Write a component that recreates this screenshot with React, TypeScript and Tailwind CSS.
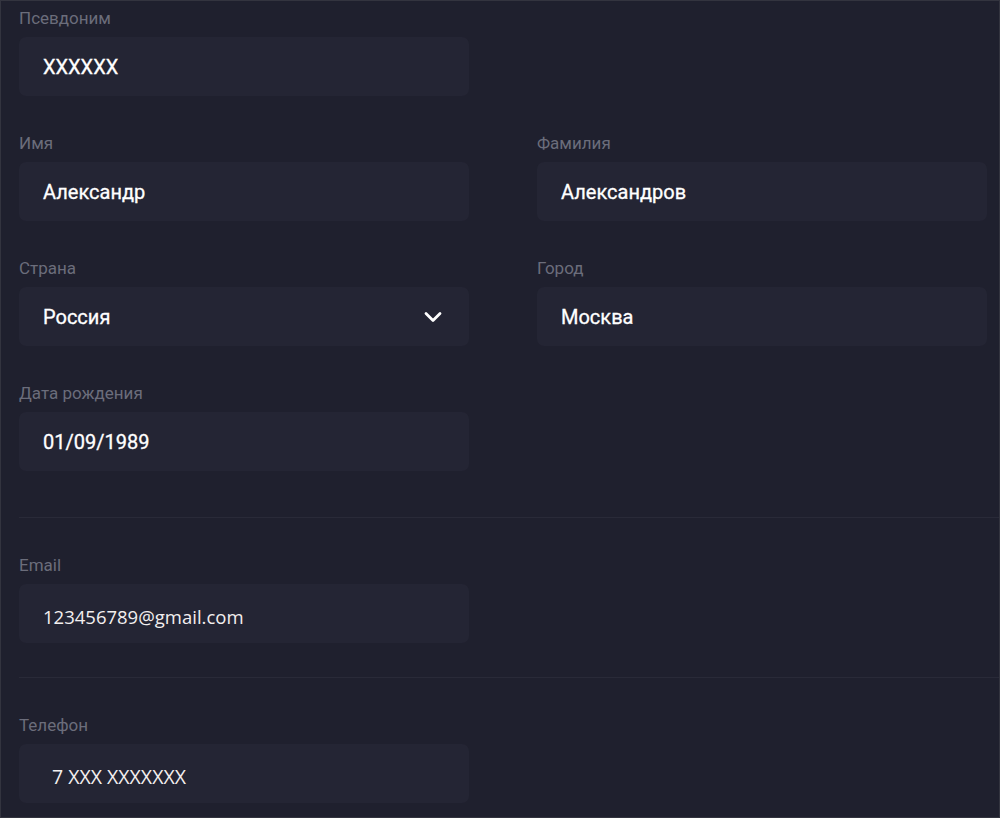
import { ChevronDown } from "lucide-react";

const roboto = { fontFamily: "Roboto, 'Noto Sans', sans-serif" };

function Field({
  label,
  value,
  select,
  alt,
  indent,
}: {
  label: string;
  value: string;
  select?: boolean;
  alt?: boolean;
  indent?: boolean;
}) {
  return (
    <div className="flex flex-col w-[450px]">
      <div className="text-[17px] leading-[20px] text-[#6b6d7b] h-[20px]">{label}</div>
      <div className="mt-[9px] h-[59px] rounded-[7px] bg-[#242534] flex items-center justify-between pr-[22px]">
        <span
          className={
            alt
              ? `font-['Open_Sans',sans-serif] text-[#f3efef] pt-[7px] ${indent ? "pl-[33px] text-[19.5px]" : "pl-[24px] text-[18.5px]"}`
              : "pl-[24px] text-[20px] font-normal text-white [-webkit-text-stroke:0.3px_white]"
          }
        >
          {value}
        </span>
        {select && <ChevronDown size={28} strokeWidth={2.4} className="text-white" />}
      </div>
    </div>
  );
}

export default function App() {
  return (
    <div
      style={roboto}
      className="w-[1000px] h-[818px] bg-[#1f202e] border-t border-l border-r border-b border-[#33343f] overflow-hidden"
    >
      <div className="pl-[18px] pt-[7px] flex flex-col">
        <div className="flex flex-col gap-[37px]">
          <Field label="Псевдоним" value="XXXXXX" />
          <div className="flex gap-[68px]">
            <Field label="Имя" value="Александр" />
            <Field label="Фамилия" value="Александров" />
          </div>
          <div className="flex gap-[68px]">
            <Field label="Страна" value="Россия" select />
            <Field label="Город" value="Москва" />
          </div>
          <Field label="Дата рождения" value="01/09/1989" />
        </div>
        <div className="mt-[46px] h-px bg-[#292a38]" />
        <div className="mt-[37px]">
          <Field label="Email" value="123456789@gmail.com" alt />
        </div>
        <div className="mt-[34px] h-px bg-[#292a38]" />
        <div className="mt-[37px]">
          <Field label="Телефон" value="7 XXX XXXXXXX" alt indent />
        </div>
      </div>
    </div>
  );
}
